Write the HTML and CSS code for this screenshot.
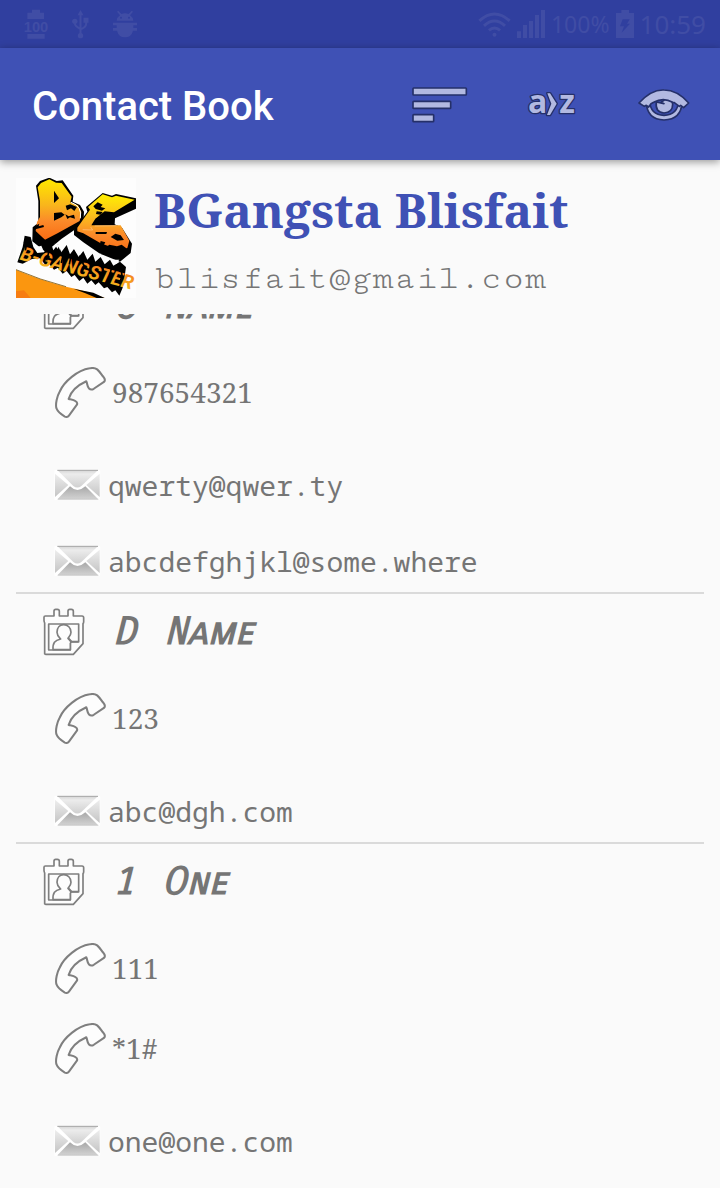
FILE: index.html
```html
<!DOCTYPE html>
<html lang="en">
<head>
<meta charset="utf-8">
<meta name="viewport" content="width=device-width, initial-scale=1">
<title>Contact Book</title>
<link rel="stylesheet" href="styles.css">
</head>
<body>
<svg class="defs" aria-hidden="true">
  <defs>
    <linearGradient id="paper" x1="0" y1="0" x2="0" y2="1">
      <stop offset="0" stop-color="#eeeeee"/><stop offset="1" stop-color="#c4c4c4"/>
    </linearGradient>
    <linearGradient id="flap" x1="0" y1="0" x2="0" y2="1">
      <stop offset="0" stop-color="#d8d8d8"/><stop offset=".2" stop-color="#ececec"/><stop offset="1" stop-color="#d0d0d0"/>
    </linearGradient>
    <linearGradient id="fold" x1="0" y1="0" x2="0" y2="1">
      <stop offset="0" stop-color="#a8a8a8"/><stop offset="1" stop-color="#d2d2d2"/>
    </linearGradient>
    <symbol id="i-mail" viewBox="0 0 144 96">
      <rect x="1" y="3" width="138" height="90" rx="3" fill="#fff"/>
      <path d="M3 14v70l40-36z" fill="url(#paper)"/>
      <path d="M137 14v70L97 48z" fill="url(#paper)"/>
      <path d="M12 5h118L82 51q-12 9-24 0z" fill="url(#flap)"/>
      <path d="M11 90l37-38q22 22 46 0l38 38z" fill="url(#fold)"/>
      <path d="M10 4h122" stroke="#a0a0a0" stroke-width="3"/>
      <path d="M11 91h122" stroke="#b8b8b8" stroke-width="2"/>
    </symbol>
    <symbol id="i-phone" viewBox="0 0 150 150">
      <path d="M102 4C66 10 27 42 14 72 6 86 1 108 4 121c5 13 17 20 25 25 5 2 9 1 12-3l24-33c1-5 0-7-4-9-6-5-11-5-21-7C47 71 70 52 92 42c4 8 2 15 8 21 4 4 9 4 14 1l30-20c5-5 3-9-1-14-7-9-11-16-19-23-6-4-14-5-22-3z" fill="#fdfdfd" stroke="#7f7f7f" stroke-width="6" stroke-linejoin="round"/>
    </symbol>
    <symbol id="i-card" viewBox="0 0 126 144">
      <g fill="#fdfdfd" stroke="#7f7f7f" stroke-width="5" stroke-linejoin="round">
        <path d="M5 138V45q-2-4-2-8V28q0-4 4-4H33V9q0-5 5-5h5q6 0 6 6v14H75V9q0-5 5-5h5q6 0 6 6v14h26q5 0 5 5v12q0 4-2 6v60l-29 32H8q-3 0-3-3z"/>
        <path d="M17 48h90v54H82v24H17z"/>
        <path d="M30 125c-1-20 5-28 23-32-5-5-11-10-11-20 0-14 8-23 20-23s22 9 22 23c0 8-6 13-9 18 6 6 11 12 7 15v19z"/>
        <path d="M76 90l10 11h20" fill="none"/>
      </g>
    </symbol>
  </defs>
</svg>

<div class="screen">
  <div class="status">
    <div class="status-group status-left">
      <svg class="st-batt" viewBox="0 0 72 90" fill="currentColor" aria-hidden="true">
        <path d="M24 2h24v9h12v19H10V11h14zM10 75h52v14H10z"/>
        <text x="36" y="70" class="batt-text">100</text>
      </svg>
      <svg class="st-usb" viewBox="0 0 50 90" fill="none" stroke="currentColor" stroke-width="6" aria-hidden="true">
        <path d="M25 12v66M8 36v7q0 9 17 17M42 32v12q0 10-17 17"/>
        <g fill="currentColor" stroke="none"><path d="M25 3l9 16H16zM34 26h15v15H34z"/><circle cx="8" cy="37" r="8"/><circle cx="25" cy="80" r="8"/></g>
      </svg>
      <svg class="st-bug" viewBox="0 0 72 84" fill="currentColor" aria-hidden="true">
        <path d="M12 5l4-3 9 10q11-5 22 0l9-10 4 3-9 11q10 7 10 16H11q0-9 10-16zM0 38h72v8H61v8h11v8H60q-5 20-24 20T12 62H0v-8h11v-8H0z"/>
        <circle cx="24" cy="23" r="3" fill="#303f9f"/><circle cx="48" cy="23" r="3" fill="#303f9f"/>
      </svg>
    </div>
    <div class="status-group status-right">
      <svg class="st-wifi" viewBox="0 0 98 76" fill="none" stroke="currentColor" stroke-width="9" aria-hidden="true">
        <path d="M3 27q46-42 92 0M17 42q32-29 64 0M32 56q17-15 34 0"/><circle cx="49" cy="69" r="6" fill="currentColor" stroke="none"/>
      </svg>
      <svg class="st-signal" viewBox="0 0 84 84" fill="currentColor" aria-hidden="true">
        <path d="M0 64h12v20H0zM18 45h12v39H18zM36 33h12v51H36zM54 15h12v69H54zM72 0h12v84H72z"/>
      </svg>
      <span class="percent">100%</span>
      <svg class="st-charge" viewBox="0 0 54 84" fill="currentColor" aria-hidden="true">
        <path d="M16 0h23v9h15v75H0V9h16z"/><path d="M20 28h21l-8 13h9L17 68l7-19H12z" fill="#303f9f"/>
      </svg>
      <span>10:59</span>
    </div>
  </div>

  <header class="appbar">
    <h1 class="title">Contact Book</h1>
    <button class="action" aria-label="Filter">
      <svg class="ic-sort" viewBox="0 0 168 108" aria-hidden="true">
        <g class="glyph"><rect x="3" y="3" width="160" height="21" rx="2"/><rect x="3" y="43" width="113" height="21" rx="2"/><rect x="3" y="83" width="62" height="21" rx="2"/></g>
      </svg>
    </button>
    <button class="action" aria-label="Sort alphabetically">
      <svg class="ic-az" viewBox="0 0 144 90" aria-hidden="true">
        <g class="glyph glyph-text"><text x="0" y="70">a</text><text x="94" y="70">z</text><path d="M58 10h8l20 31-20 34h-9l13-34z"/></g>
      </svg>
    </button>
    <button class="action" aria-label="Show">
      <svg class="ic-eye" viewBox="0 0 156 96" aria-hidden="true">
        <g class="glyph">
          <path d="M25 40q2 52 53 53 52-1 54-53z"/>
          <path d="M35 36q2 42 43 43 41-1 44-43-43-22-87 0z" class="eyeball"/>
          <path d="M78 34l-8 5 8 5-23-5q-4 32 23 33 26-1 26-26-1-13-13-18l-24-2z"/>
          <path d="M3 42Q40 1 78 3q40 0 74 39l-15 14-9-7-4 3-15-11-5-1q-28-16-57 0l-8 4-7 10-7-5-6 3z"/>
        </g>
      </svg>
    </button>
  </header>

  <section class="profile">
    <svg class="avatar" viewBox="48 39 360 360" role="img" aria-label="B-Gangster logo">
      <defs>
        <linearGradient id="fireB" gradientUnits="userSpaceOnUse" x1="160" y1="45" x2="160" y2="235">
          <stop offset="0" stop-color="#ffe600"/><stop offset=".4" stop-color="#f9b51c"/><stop offset=".65" stop-color="#fb8a2a"/><stop offset="1" stop-color="#f9660f"/>
        </linearGradient>
        <linearGradient id="fireG" gradientUnits="userSpaceOnUse" x1="320" y1="85" x2="320" y2="275">
          <stop offset="0" stop-color="#fff200"/><stop offset=".35" stop-color="#fbc01c"/><stop offset=".65" stop-color="#fb8a2a"/><stop offset="1" stop-color="#f8650f"/>
        </linearGradient>
        <linearGradient id="fireS" x1="0" y1="0" x2="0" y2="1">
          <stop offset="0" stop-color="#f47a20"/><stop offset="1" stop-color="#f6c21c"/>
        </linearGradient>
      </defs>
      <rect x="48" y="39" width="360" height="360" fill="#fdfdfd"/>
      <path d="M108 62l12-14 28-10 22 10 18-2 32 46-2 18 22 10 12 20-2 36-65 45-48 40-40-32 1-42 17-14V108z"/>
      <path d="M113 67l10-13 25-11 20 10 17 1 30 41-4 17 23 9 10 20-5 27-65 36-39 20-28-26 4-27 9-15V108z" fill="url(#fireB)"/>
      <path d="M162 77l15 23-15 14zM162 144l22-2 10 7-10 8-22 10zM197 122l14-4 20 8-8 12-10-8-12 6zM196 148l10 6 16-5 3 12-15-4-8 5zM104 184l14-8-2 8 14-4 2 6-26 7zM101 204l39 24-2 7-38-22z"/>
      <path d="M213 112q35 12 28 48" fill="none" stroke="#fff" stroke-width="3"/>
      <path d="M222 194l40-54-4-14 50-42 28 8 12-5 62 13 1 30-66 30-1 18 22 10 30 48-4 28-32 26-60-24-50-34-28-22z"/>
      <path d="M232 188l38-54-6-8 44-38 28 9 12-5 56 12-62 38-28-3-28 22-12 20h88l26 46-6 22-18 8-62-22-52-30-18-6z" fill="url(#fireG)"/>
      <path d="M280 124l13-12 15 7-6 7 14 4-10 7-19-5zM290 139l18 2-6 8-14-2zM332 216l14-10 16 5 10 14-20 2zM316 248l12-9 23 5 14-5 20 15-18 13-24-12-15 3zM302 228l14 4-6 10-10-6zM287 201h34l-2 6h-32z"/>
      <path d="M248 194l30 1-6-9M284 183l66-1" fill="none" stroke="#ffc58a" stroke-width="2"/>
      <path d="M52 292l16-46 6-34 18 4 8 30 12 18 20-2 20-30 8 24 14-18 8 26 18-24 10 28 12-16 14 24 14-18 12 26 16-18 8 24 16-14 12 22 16-14 10 18 20-12 18 16-6 42-4 20-10 24-12-16-10 6-14-16-10 4-16-18-10 8-12-14-12 10-12-18-12 10-14-18-10 6-14-18-12 8-14-18-12 6-14-16-12 2-16-20-24 2-28 14z"/>
      <text class="tag" transform="rotate(15 60 282)" x="58" y="284">B-GANGSTER</text>
      <path d="M72 230l8 6-4 20M146 262l-6 24M178 254l10 22-4 18M214 268l-6 30M238 272l14 30-6 22M276 284l-8 34M300 286l10 30-6 26M336 300l-8 40M362 300l4 32-8 26" fill="none" stroke="#000" stroke-width="5"/>
      <path d="M110 246l14-4 6 14zM164 236l8 16 8-12zM222 250l8 14 8-14zM286 266l8 14 10-14zM340 284l8 14 10-14z" fill="#fdfdfd"/>
      <path d="M48 314q70 30 150 51 66 13 116 34H48z" fill="#fb960f"/>
      <path d="M48 379l24-3 20 23H48z" fill="#f77c10"/>
      <path d="M48 314q70 30 150 51" fill="none" stroke="#92753a" stroke-width="3"/>
      <path d="M220 371l60 12 34 16h-24q-35-16-70-28z"/>
    </svg>
    <div class="who">
      <h2 class="name">BGangsta Blisfait</h2>
      <p class="email">blisfait@gmail.com</p>
    </div>
  </section>

  <main class="viewport">
    <ul class="contacts">
      <li class="contact">
        <h3 class="head"><svg class="card" aria-hidden="true"><use href="#i-card"/></svg><span>C</span><span>Name</span></h3>
        <div class="phones">
          <p class="phone"><svg aria-hidden="true"><use href="#i-phone"/></svg>987654321</p>
        </div>
        <div class="mails">
          <p class="mail"><svg aria-hidden="true"><use href="#i-mail"/></svg>qwerty@qwer.ty</p>
          <p class="mail"><svg aria-hidden="true"><use href="#i-mail"/></svg>abcdefghjkl@some.where</p>
        </div>
      </li>
      <li class="contact">
        <h3 class="head"><svg class="card" aria-hidden="true"><use href="#i-card"/></svg><span>D</span><span>Name</span></h3>
        <div class="phones">
          <p class="phone"><svg aria-hidden="true"><use href="#i-phone"/></svg>123</p>
        </div>
        <div class="mails">
          <p class="mail"><svg aria-hidden="true"><use href="#i-mail"/></svg>abc@dgh.com</p>
        </div>
      </li>
      <li class="contact">
        <h3 class="head"><svg class="card" aria-hidden="true"><use href="#i-card"/></svg><span>1</span><span>One</span></h3>
        <div class="phones">
          <p class="phone"><svg aria-hidden="true"><use href="#i-phone"/></svg>111</p>
          <p class="phone"><svg aria-hidden="true"><use href="#i-phone"/></svg>*1#</p>
        </div>
        <div class="mails">
          <p class="mail"><svg aria-hidden="true"><use href="#i-mail"/></svg>one@one.com</p>
        </div>
      </li>
    </ul>
  </main>
</div>
</body>
</html>
```

FILE: styles.css
```css
* { box-sizing: border-box; }

body, h1, h2, h3, p, ul { margin: 0; padding: 0; }

body {
  background: #fafafa;
  color: #757575;
  font-family: Roboto, "Liberation Sans", sans-serif;
}

svg { display: block; flex: none; }

.defs { position: absolute; width: 0; height: 0; }

.screen {
  display: flex;
  flex-direction: column;
  height: 100vh;
}

/* Status bar */
.status {
  display: flex;
  justify-content: space-between;
  align-items: center;
  flex: none;
  height: 48px;
  padding: 0 14px 0 24px;
  background: #303f9f;
  color: #404da5;
  font: 26px/32px "Noto Sans", sans-serif;
}

.status-group { display: flex; align-items: center; }
.status-left { gap: 24px; }
.status-right { gap: 6px; }
.percent { font-size: 23px; }
.st-batt { width: 24px; height: 30px; overflow: visible; }
.st-usb { width: 17px; height: 30px; }
.st-bug { width: 24px; height: 28px; }
.st-wifi { width: 33px; height: 25px; }
.st-signal { width: 28px; height: 28px; }
.st-charge { width: 18px; height: 28px; }
.batt-text { font: bold 44px "Liberation Sans", sans-serif; text-anchor: middle; }

/* App bar */
.appbar {
  display: flex;
  align-items: center;
  flex: none;
  height: 112px;
  padding: 2px 0 0 32px;
  background: #3f51b5;
  box-shadow: 0 2px 8px rgba(0, 0, 0, .4);
  z-index: 1;
}

.title {
  flex: 1;
  padding-top: 4px;
  color: #fff;
  font-size: 40px;
  font-weight: 500;
  line-height: 48px;
}

.action {
  display: flex;
  align-items: center;
  justify-content: center;
  width: 112px;
  height: 110px;
  padding: 0;
  border: 0;
  background: none;
}

.ic-sort { width: 56px; height: 36px; }
.ic-az { width: 48px; height: 30px; overflow: visible; }
.ic-eye { width: 52px; height: 32px; }

.glyph {
  fill: #b2b9e1;
  stroke: #253069;
  stroke-width: 5px;
  stroke-linejoin: round;
}

.eyeball { fill: #3f51b5; }

.glyph-text {
  font: 700 96px "Open Sans", "Noto Sans", sans-serif;
  paint-order: stroke;
  stroke-width: 8px;
}

/* Owner */
.profile {
  display: flex;
  flex: none;
  gap: 18px;
  padding: 18px 16px 16px;
}

.avatar { width: 120px; height: 120px; }

.tag {
  font: italic bold 58px Roboto, "Liberation Sans", sans-serif;
  fill: url(#fireS);
}

.who { min-width: 0; }

.name {
  color: #3f51b5;
  font: bold 48px/64px "Noto Serif", "Droid Serif", "Liberation Serif", serif;
  white-space: nowrap;
}

.email {
  padding-top: 16px;
  font: 36px/40px "Cutive Mono", "Liberation Mono", monospace;
}

/* Contact list */
.viewport {
  flex: 1;
  min-height: 0;
  padding: 0 16px;
  overflow: hidden;
}

.contacts {
  margin-top: -46px;
  list-style: none;
}

.contact + .contact { border-top: 2px solid #dadada; }

.head {
  display: flex;
  align-items: center;
  gap: 28px;
  height: 84px;
  padding: 0 27px 8px;
  font: italic bold 38px/48px "Carrois Gothic SC", Roboto, sans-serif;
}

.card { width: 42px; height: 48px; }

.phone {
  display: flex;
  align-items: center;
  gap: 6px;
  height: 80px;
  padding-left: 39px;
  font: 28px/40px "Noto Serif", "Droid Serif", "Liberation Serif", serif;
}

.phone svg { width: 51px; height: 51px; }

.mails {
  display: flex;
  flex-direction: column;
  gap: 14px;
  padding-top: 22px;
}

.mail {
  display: flex;
  align-items: center;
  gap: 6px;
  height: 62px;
  padding-left: 38px;
  font: 28px/40px "Droid Sans Mono", "Noto Sans Mono", "DejaVu Sans Mono", monospace;
}

.mail svg { width: 48px; height: 32px; }
```
